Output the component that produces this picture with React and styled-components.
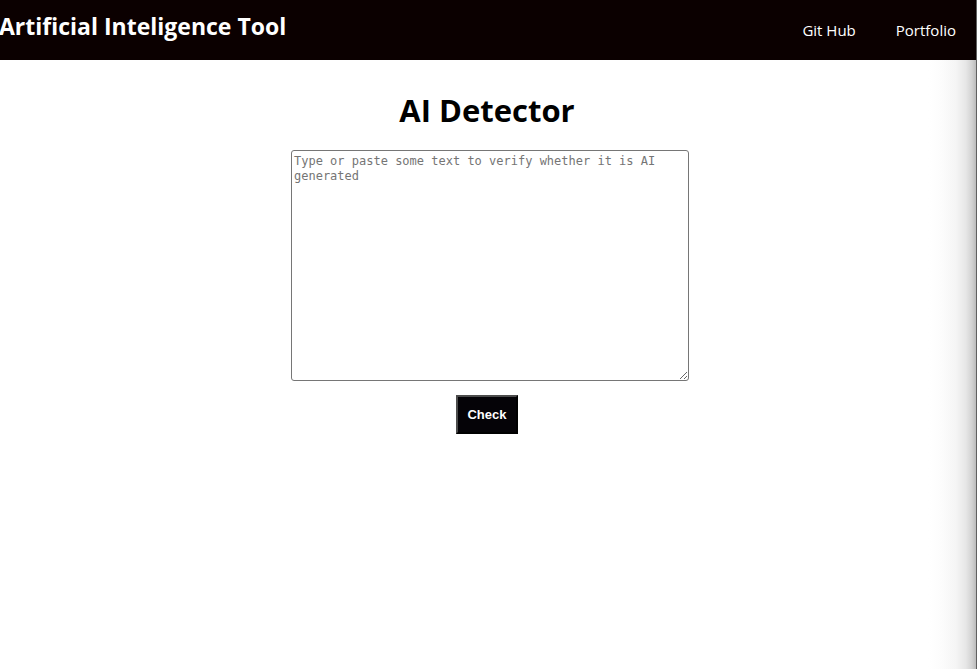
import React from "react";
import styled, { createGlobalStyle } from "styled-components";

const GlobalStyle = createGlobalStyle`
  * { box-sizing: border-box; }
  body {
    margin: 0;
    background: #fff;
    color: #000;
    font-family: "Open Sans", "Noto Sans", sans-serif;
  }
`;

const Page = styled.div`
  min-height: 100vh;
  display: flex;
  flex-direction: column;
  border-right: 1px solid #606060;
  background: linear-gradient(to left, #bcbcbc 0, #d2d2d2 4px, #e6e6e6 10px, #f5f5f5 20px, #fcfcfc 34px, #fff 48px);
`;

const Header = styled.header`
  display: flex;
  justify-content: space-between;
  height: 60px;
  background: #0b0000;
  color: #fff;
`;

const Brand = styled.h2`
  margin: 10px 0 0 -1px;
  font-size: 23px;
  line-height: 32px;
  font-weight: 700;
`;

const Nav = styled.nav`
  display: flex;
  gap: 40px;
  padding: 20px 20px 0 0;
`;

const NavLink = styled.a`
  color: #fff;
  font-size: 15px;
  line-height: 21px;
  text-decoration: none;
`;

const Detector = styled.main`
  display: flex;
  flex-direction: column;
  align-items: center;
  padding: 28px 2px 0 0;
`;

const Title = styled.h1`
  margin: 0 0 18px;
  font-size: 31px;
  line-height: 44px;
  font-weight: 700;
`;

const TextBox = styled.textarea`
  width: 398px;
  height: 231px;
  margin: 0 0 14px 6px;
  padding: 3px 2px 2px;
  border: 1px solid #767676;
  border-radius: 3px;
  background: #fff;
  font-family: "DejaVu Sans Mono", monospace;
  font-size: 12px;
  line-height: 15px;
  &::placeholder { color: #757575; }
`;

const CheckButton = styled.button`
  padding: 10px 9px;
  height: 39px;
  border: 2px solid;
  border-color: #4c4c4c #000 #000 #4c4c4c;
  background: #050307;
  color: #fff;
  font-family: "Liberation Sans", Arial, sans-serif;
  font-size: 13px;
  line-height: 15px;
  font-weight: 700;
`;

export default function App() {
  return (
    <Page>
      <GlobalStyle />
      <Header>
        <Brand>Artificial Inteligence Tool</Brand>
        <Nav>
          <NavLink href="#github">Git Hub</NavLink>
          <NavLink href="#portfolio">Portfolio</NavLink>
        </Nav>
      </Header>
      <Detector>
        <Title>AI Detector</Title>
        <TextBox
          aria-label="Text to verify"
          placeholder="Type or paste some text to verify whether it is AI generated"
        />
        <CheckButton type="button">Check</CheckButton>
      </Detector>
    </Page>
  );
}
